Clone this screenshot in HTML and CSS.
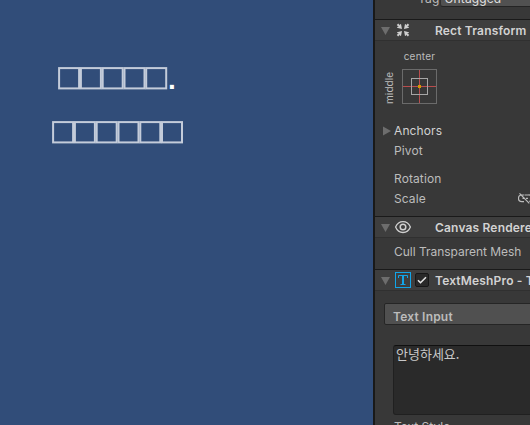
FILE: index.html
```html
<!DOCTYPE html>
<html lang="ko">
<head>
<meta charset="utf-8">
<title>Inspector</title>
<link rel="stylesheet" href="styles.css">
</head>
<body>
<div class="editor">
  <main class="scene">
    <div class="line">
      <svg width="110" height="24" viewBox="0 0 110 24"><g class="tofu"><rect x="1.1" y="1.1" width="20" height="20.3"/><rect x="22.9" y="1.1" width="20" height="20.3"/><rect x="44.7" y="1.1" width="20" height="20.3"/><rect x="66.5" y="1.1" width="20" height="20.3"/><rect x="88.2" y="1.1" width="20" height="20.3"/></g></svg><span class="dot">.</span>
    </div>
    <div class="line second">
      <svg width="133" height="24" viewBox="0 0 133 24"><g class="tofu"><rect x="1.1" y="1.1" width="20" height="20.3"/><rect x="22.9" y="1.1" width="20" height="20.3"/><rect x="44.7" y="1.1" width="20" height="20.3"/><rect x="66.5" y="1.1" width="20" height="20.3"/><rect x="88.3" y="1.1" width="20" height="20.3"/><rect x="110" y="1.1" width="20" height="20.3"/></g></svg>
    </div>
  </main>
  <aside class="inspector">
    <div class="tag-row"><span>Tag</span><div class="select">Untagged</div></div>
    <section class="rect">
      <header>
        <svg class="fold" width="10" height="8"><path d="M0 0h9L4.5 8z"/></svg>
        <svg class="icon" width="16" height="16" viewBox="0 0 16 16" fill="#d0d0d0"><path d="M7 7L6 2L4.8 2.4L5 3.6L3.2 1.6L1.8 3L3.8 4.9L2.4 4.7L2 5.8zM9 7L10 2L11.2 2.4L11 3.6L12.8 1.6L14.2 3L12.2 4.9L13.6 4.7L14 5.8zM7 9L6 14L4.8 13.6L5 12.4L3.2 14.4L1.8 13L3.8 11.1L2.4 11.3L2 10.2zM9 9L10 14L11.2 13.6L11 12.4L12.8 14.4L14.2 13L12.2 11.1L13.6 11.3L14 10.2z"/></svg>
        <h2>Rect Transform</h2>
      </header>
      <div class="anchor">
        <span class="middle">middle</span>
        <div class="preset">
          <span>center</span>
          <svg width="35" height="35" viewBox="0 0 35 35" fill="none"><rect x=".5" y=".5" width="34" height="34" stroke="#6b6b6b"/><path d="M17.5 1v33M1 17.5h33" stroke="#b94d4d"/><rect x="9.5" y="9.5" width="16" height="16" stroke="#a6a6a6"/><path d="M16 16h3v3h-3z" fill="#d49a00"/></svg>
        </div>
      </div>
      <div class="row anchors"><svg class="right" width="8" height="10"><path d="M0 .5v9L8 5z"/></svg><span class="bright">Anchors</span></div>
      <div class="row">Pivot</div>
      <div class="row rotation">Rotation</div>
      <div class="row">Scale
        <svg class="link" width="14" height="12" viewBox="0 0 14 12" fill="none" stroke="#bcbcbc" stroke-width="1.2"><path d="M6 2H3.8a3.2 3.2 0 0 0 0 6.6H6M4.5 5.3H7M6.5 2h3.7a3.2 3.2 0 0 1 1 6.4M8 5.3h2M1.5 .4l9.8 10"/></svg>
      </div>
    </section>
    <section class="canvas">
      <header>
        <svg class="fold" width="10" height="8"><path d="M0 0h9L4.5 8z"/></svg>
        <svg class="icon" width="16" height="16" viewBox="0 0 16 16" fill="none" stroke="#d0d0d0"><path d="M.6 8C3.7.7 12.3.7 15.4 8C12.3 15.3 3.7 15.3.6 8z" stroke-width="1.3"/><circle cx="8" cy="8" r="2.8" stroke-width="1.5"/></svg>
        <h2>Canvas Renderer</h2>
      </header>
      <div class="row cull">Cull Transparent Mesh</div>
    </section>
    <section class="tmp">
      <header>
        <svg class="fold" width="10" height="8"><path d="M0 0h9L4.5 8z"/></svg>
        <svg class="icon" width="16" height="16" viewBox="0 0 16 16" fill="none" stroke="#12a5e8"><rect x=".5" y=".5" width="15" height="15"/><path d="M3.5 6V3.5h9V6M5.5 12.5h5"/><path d="M8 3.5v9" stroke-width="2"/></svg>
        <div class="check"><svg width="12" height="12" viewBox="0 0 12 12" fill="none" stroke="#e4e4e4" stroke-width="1.6"><path d="M2 6.2l2.5 2.5L10 3.2"/></svg></div>
        <h2>TextMeshPro - Text</h2>
      </header>
      <div class="bar">Text Input</div>
      <div class="textarea">안녕하세요.</div>
      <div class="row style">Text Style</div>
    </section>
  </aside>
</div>
</body>
</html>
```
FILE: styles.css
```css
* { box-sizing: border-box; }
body { margin: 0; overflow: hidden; }
svg { display: block; flex: none; }

.editor {
  display: flex;
  width: 530px;
  height: 425px;
  overflow: hidden;
  background: #383838;
  color: #bcbcbc;
  font: 12px/20px Inter, "Noto Sans CJK KR", sans-serif;
  white-space: nowrap;
}

.scene {
  flex: 0 0 373px;
  padding: 67px 0 0 58px;
  background: #314d79;
}
.line { display: flex; height: 24px; }
.second { margin: 30px 0 0 -6px; }
.tofu { fill: none; stroke: #c4ccda; stroke-width: 2; }
.dot {
  color: #fff;
  font: bold 28px/26px "Liberation Sans", sans-serif;
}

.inspector {
  flex: 0 0 157px;
  border-left: 2px solid #191919;
  overflow: hidden;
}
.tag-row {
  display: flex;
  height: 19px;
  padding-left: 43px;
}
.tag-row span { width: 25px; margin-top: -11px; letter-spacing: .2px; }
.select {
  flex: none;
  width: 110px;
  height: 18px;
  margin-top: -11px;
  padding-left: 4px;
  border: 1px solid #303030;
  border-bottom-color: #242424;
  border-radius: 3px;
  background: #515151;
  color: #e0e0e0;
  line-height: 18px;
  letter-spacing: .1px;
}

header {
  display: flex;
  align-items: center;
  height: 22px;
  padding-left: 6px;
  border-top: 1px solid #1a1a1a;
  border-bottom: 1px solid #303030;
  background: #3e3e3e;
}
h2 {
  margin: 1px 0 0 24px;
  color: #d2d2d2;
  font-size: 12px;
  font-weight: 600;
  letter-spacing: .17px;
}
.fold { margin-top: 2px; fill: #6d6d6d; }
.icon { margin-left: 4px; }
.rect { height: 197px; }
.canvas { height: 53px; }

.anchor { display: flex; height: 80px; padding: 5px 0 0 8px; }
.middle {
  width: 14px;
  height: 35px;
  margin: 24px 6px 0 -1px;
  font-size: 10px;
  line-height: 14px;
  letter-spacing: .1px;
  text-align: center;
  writing-mode: vertical-rl;
  transform: rotate(180deg);
}
.preset {
  display: flex;
  flex-direction: column;
  align-items: center;
  width: 35px;
  font-size: 10px;
  line-height: 20px;
  letter-spacing: .25px;
}
.preset svg { margin-top: 3px; }
.row {
  display: flex;
  align-items: center;
  height: 20px;
  padding-left: 19px;
  letter-spacing: .1px;
}
.anchors { padding-left: 8px; }
.right { margin-right: 3px; fill: #6d6d6d; }
.bright { color: #d2d2d2; }
.rotation { margin-top: 8px; }
.link { margin-left: 92px; }
.cull { margin-top: 4px; letter-spacing: -.03px; }

.check {
  display: grid;
  place-items: center;
  width: 14px;
  height: 14px;
  margin-left: 4px;
  border: 1px solid #171717;
  border-radius: 2px;
  background: #292929;
}
.check + h2 { margin-left: 6px; }
.bar {
  width: 170px;
  height: 22px;
  margin: 12px 0 0 9px;
  padding: 3px 0 0 8px;
  border: 1px solid #252525;
  border-radius: 2px;
  background: #505050;
  font-weight: 600;
  letter-spacing: .2px;
}
.textarea {
  width: 170px;
  height: 70px;
  margin: 20px 0 0 18px;
  padding: 0 2px;
  border: 1px solid #202020;
  border-top-color: #101010;
  border-radius: 3px;
  background: #2a2a2a;
  color: #c8c8c8;
  font: 13px/16px "Noto Sans CJK KR", sans-serif;
}
.style { margin-top: 2px; letter-spacing: 0; }
```
